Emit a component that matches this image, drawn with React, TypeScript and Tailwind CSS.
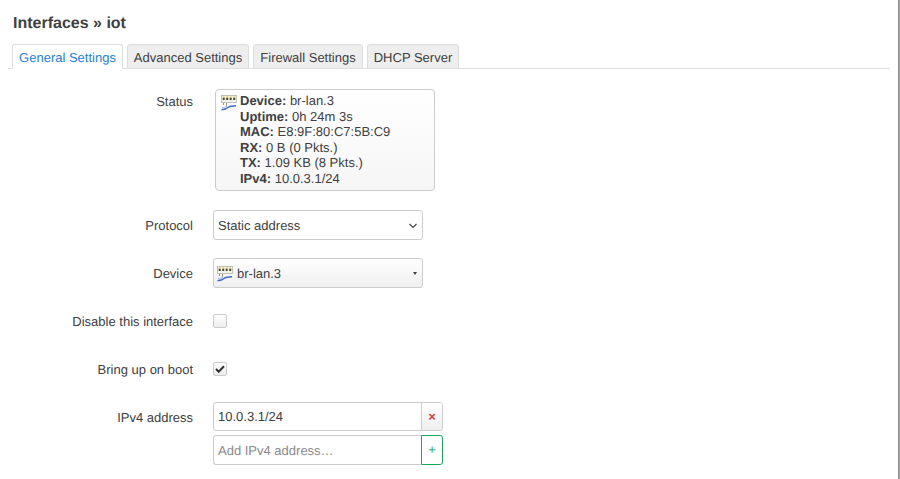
const font = { fontFamily: '"Liberation Sans", Arial, sans-serif' }

const NetIcon = ({ className }: { className: string }) => (
    <svg className={className} viewBox="0 0 16 16" width="16" height="16">
        <rect x="0.5" y="0.5" width="15" height="7" fill="#f4f3ea" stroke="#b4b4a8" strokeWidth="0.8" />
        <rect x="1.7" y="1.6" width="2" height="1.2" fill="#d9c45a" />
        <rect x="5.2" y="1.6" width="2" height="1.2" fill="#d9c45a" />
        <rect x="8.700" y="1.6" width="2" height="1.2" fill="#d9c45a" />
        <rect x="12.200" y="1.6" width="2" height="1.2" fill="#d9c45a" />
        <rect x="1.7" y="2.8" width="2" height="2.2" fill="#4a4838" />
        <rect x="5.2" y="2.8" width="2" height="2.2" fill="#4a4838" />
        <rect x="8.700" y="2.8" width="2" height="2.2" fill="#4a4838" />
        <rect x="12.200" y="2.8" width="2" height="2.2" fill="#4a4838" />
        <path d="M2.500 8v2M5.500 8v4" stroke="#77776a" strokeWidth="0.8" fill="none" />
        <path d="M0.500 14.700c3-.2 5-.8 6.500-2.200s3.500-1.800 8-1.800" stroke="#3f6fc4" strokeWidth="1.400" fill="none" />
        <path d="M1 12.500c2 0 3.500-.4 5-1.400" stroke="#9dbaea" strokeWidth="1" fill="none" />
    </svg>
)

const Tab = ({ label, active, w }: { label: string; active?: boolean; w: string }) => (
    <div
        className={`${w} h-[25px] shrink-0 pt-[2px] flex items-center justify-center border border-[#ddd] rounded-t-[3px] text-[13px] ${
            active ? "bg-white border-b-white text-[#2580d8] relative z-10" : "bg-[#eeeeee] text-[#404040]"
        }`}
    >
        {label}
    </div>
)

const Row = ({ label, className, children }: { label: string; className: string; children: React.ReactNode }) => (
    <div className={`flex ${className}`}>
        <div className="w-[185px] shrink-0 text-right text-[13px] text-[#404040]">{label}</div>
        <div className="ml-5">{children}</div>
    </div>
)

const statusLines = [
    ["Device:", "br-lan.3"],
    ["Uptime:", "0h 24m 3s"],
    ["MAC:", "E8:9F:80:C7:5B:C9"],
    ["RX:", "0 B (0 Pkts.)"],
    ["TX:", "1.09 KB (8 Pkts.)"],
    ["IPv4:", "10.0.3.1/24"],
]

export default function App() {
    return (
        <div className="w-[900px] h-[479px] overflow-hidden bg-white flex text-[#404040] [text-rendering:geometricPrecision]" style={font}>
            <div className="w-[898px] pl-2 pr-2">
                <h2 className="pl-[5px] pt-[15px] h-[44px] text-[16px] leading-[18px] font-bold text-[#404040]">Interfaces » iot</h2>

                <div className="flex gap-1 pl-1 w-[882px] h-[25px] border-b border-[#dddddd]">
                    <Tab label="General Settings" active w="w-[111px]" />
                    <Tab label="Advanced Settings" w="w-[122px]" />
                    <Tab label="Firewall Settings" w="w-[110px]" />
                    <Tab label="DHCP Server" w="w-[92px]" />
                </div>

                <Row label="Status" className="pt-[20px] leading-[26px]">
                    <div className="ml-[2px] w-[220px] h-[102px] border border-[#ccc] rounded-[4px] bg-gradient-to-b from-white to-[#f6f6f6] pl-[5px] pt-[3px] flex">
                        <NetIcon className="mt-[2px] mr-[3px] shrink-0" />
                        <div className="text-[13px] leading-[15.6px] text-[#404040]">
                            {statusLines.map(([k, v]) => (
                                <div key={k}>
                                    <b>{k}</b> {v}
                                </div>
                            ))}
                        </div>
                    </div>
                </Row>

                <Row label="Protocol" className="pt-[19px] h-[49px] leading-[32px]">
                    <div className="w-[210px] h-[30px] border border-[#ccc] rounded-[3px] bg-white pl-1 pr-[5px] pt-px flex items-center justify-between text-[13px]">
                        <span>Static address</span>
                        <svg width="8" height="6" viewBox="0 0 8 6">
                            <path d="M0.500 1l3.500 3.500L7.500 1" stroke="#404040" strokeWidth="1.100" fill="none" />
                        </svg>
                    </div>
                </Row>

                <Row label="Device" className="pt-[18px] h-[48px] leading-[32px]">
                    <div className="w-[210px] h-[30px] border border-[#ccc] rounded-[3px] bg-gradient-to-b from-white to-[#efefef] pl-[3px] pr-[5px] pt-px flex items-center text-[13px]">
                        <NetIcon className="mr-1 shrink-0" />
                        <span>br-lan.3</span>
                        <span className="ml-auto w-0 h-0 border-x-[2px] border-x-transparent border-t-[3px] border-t-[#404040]" />
                    </div>
                </Row>

                <Row label="Disable this interface" className="pt-[26px] leading-[15px] h-[47px]">
                    <div className="w-[14px] h-[14px] border border-[#ccc] rounded-[2px] bg-gradient-to-b from-white to-[#ececec]" />
                </Row>

                <Row label="Bring up on boot" className="pt-[27px] leading-[15px] h-[48px]">
                    <div className="w-[14px] h-[14px] border border-[#ccc] rounded-[2px] bg-gradient-to-b from-white to-[#ececec] flex items-center justify-center">
                        <svg width="10" height="8" viewBox="0 0 10 8">
                            <path d="M1 4l2.700 2.700L9 1.200" stroke="#303030" strokeWidth="2" fill="none" />
                        </svg>
                    </div>
                </Row>

                <Row label="IPv4 address" className="pt-[19px] leading-[32px]">
                    <div className="flex flex-col gap-1 text-[13px]">
                        <div className="flex w-[230px] h-[29px] border border-[#ccc] rounded-[3px] overflow-hidden">
                            <div className="w-[207px] pl-1 flex items-center">10.0.3.1/24</div>
                            <div className="flex-1 border-l border-[#ccc] bg-gradient-to-b from-white to-[#efefef] flex items-center justify-center text-[#c44] font-bold">×</div>
                        </div>
                        <div className="flex w-[230px] h-[30px]">
                            <div className="w-[208px] pl-1 pt-[2px] flex items-center border border-r-0 border-[#ccc] rounded-l-[3px] text-[#8a8a8a]">Add IPv4 address…</div>
                            <div className="flex-1 border border-[#1fa55e] rounded-r-[3px] flex items-center justify-center text-[#2fb06c]">+</div>
                        </div>
                    </div>
                </Row>
            </div>
            <div className="w-[2px] h-full bg-[#8c8c8c] border-r border-[#aaa]" />
        </div>
    )
}
